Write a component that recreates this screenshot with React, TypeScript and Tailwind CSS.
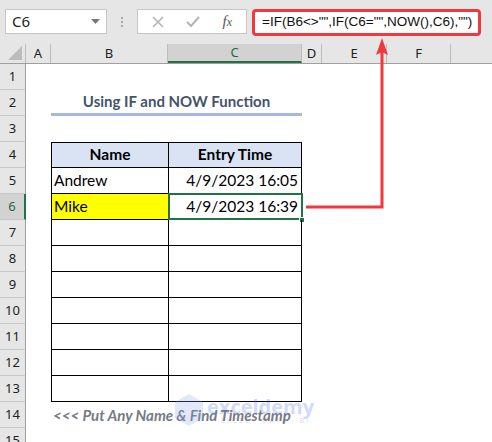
import React from "react";

const cellFont = { fontFamily: "Lato, 'Open Sans', sans-serif" };

const cols = [
  { key: "A", w: "w-[25px]" },
  { key: "B", w: "w-[117px]" },
  { key: "C", w: "w-[134px]" },
  { key: "D", w: "w-[20px]" },
  { key: "E", w: "w-[65px]" },
  { key: "F", w: "w-[64px]" },
];

function RowHeader({ n, selected }: { n: number; selected?: boolean }) {
  return (
    <div
      className={
        "w-[26px] shrink-0 h-full flex items-center justify-center text-[13px] border-b border-[#c8c8c8] " +
        (selected
          ? "bg-[#d2d2d2] text-[#1e6b3e] border-r-2 border-r-[#217346]"
          : "bg-[#e6e6e6] text-[#222] border-r border-r-[#a0a0a0]")
      }
      style={{ fontFamily: "'Noto Sans', sans-serif" }}
    >
      {n}
    </div>
  );
}

function TableRow({
  n,
  name,
  time,
  header,
  yellow,
  selected,
  first,
}: {
  n: number;
  name?: string;
  time?: string;
  header?: boolean;
  yellow?: boolean;
  selected?: boolean;
  first?: boolean;
}) {
  return (
    <div className="flex h-[26px]">
      <RowHeader n={n} selected={selected} />
      <div className="w-[25px] shrink-0" />
      <div
        className={
          "w-[117px] shrink-0 border-l border-b border-black flex items-center text-[15.5px] text-black " +
          (first ? "border-t " : "") +
          (header ? "bg-[#dae3f3] justify-center font-bold " : "pl-[2px] ") +
          (yellow ? "bg-[#ffff00] " : "")
        }
        style={cellFont}
      >
        {name}
      </div>
      <div
        className={
          "relative w-[134px] shrink-0 border-l border-r border-b border-black flex items-center text-[15.5px] text-black " +
          (first ? "border-t " : "") +
          (header ? "bg-[#dae3f3] justify-center font-bold" : "justify-end pr-[3px]")
        }
        style={cellFont}
      >
        {time}
        {selected && (
          <>
            <div className="absolute left-[-1px] right-[-2px] top-[-1px] bottom-[-1px] border-2 border-[#217346]" />
            <div className="absolute right-[-4px] bottom-[-4px] w-[6px] h-[6px] bg-[#217346] border border-white" />
          </>
        )}
      </div>
    </div>
  );
}

function PlainRow({ n, children }: { n: number; children?: React.ReactNode }) {
  return (
    <div className="flex h-[26px]">
      <RowHeader n={n} />
      <div className="flex-1 relative">{children}</div>
    </div>
  );
}

export default function App() {
  return (
    <div className="relative w-[492px] h-[442px] overflow-hidden bg-white select-none">
      {/* top bar */}
      <div className="h-[44px] bg-[#e6e6e6] flex items-start pt-[9px]">
        <div className="ml-[5px] w-[102px] h-[25px] bg-white border border-[#c6c6c6] flex items-center justify-between pl-[6px] pr-[6px]">
          <span className="text-[15px] text-[#222]" style={{ fontFamily: "'Noto Sans', sans-serif" }}>
            C6
          </span>
          <svg width="9" height="5" viewBox="0 0 9 5">
            <path d="M0 0 L9 0 L4.5 5 Z" fill="#777" />
          </svg>
        </div>
        <div className="w-[30px] h-[25px] flex flex-col items-center justify-center gap-[2px]">
          <div className="w-[2px] h-[2px] bg-[#a8a8a8]" />
          <div className="w-[2px] h-[2px] bg-[#a8a8a8]" />
          <div className="w-[2px] h-[2px] bg-[#a8a8a8]" />
        </div>
        <div className="w-[110px] h-[25px] bg-white border border-[#c6c6c6] flex items-center">
          <div className="w-[40px] flex justify-center">
            <svg width="12" height="12" viewBox="0 0 12 12">
              <path d="M1 1 L11 11 M11 1 L1 11" stroke="#b4b4b4" strokeWidth="1.6" />
            </svg>
          </div>
          <div className="w-[32px] flex justify-center">
            <svg width="14" height="12" viewBox="0 0 14 12">
              <path d="M1 6 L5 10 L13 1" stroke="#b4b4b4" strokeWidth="2" fill="none" />
            </svg>
          </div>
          <div
            className="w-[38px] flex justify-center text-[15px] italic text-[#555]"
            style={{ fontFamily: "'Liberation Serif', serif" }}
          >
            <span>
              f<span className="text-[12px]">x</span>
            </span>
          </div>
        </div>
        <div className="ml-[5px] w-[229px] h-[27px] bg-white border-[3px] border-[#f0393d] rounded-[4px] flex items-center pl-[7px]">
          <span className="text-[13.5px] text-[#111] whitespace-nowrap" style={{ fontFamily: "'Liberation Sans', sans-serif" }}>
            =IF(B6&lt;&gt;"",IF(C6="",NOW(),C6),"")
          </span>
        </div>
      </div>

      {/* column headers */}
      <div className="flex h-[20px] bg-[#e6e6e6] border-b border-[#a0a0a0]" style={{ fontFamily: "'Noto Sans', sans-serif" }}>
        <div className="w-[26px] shrink-0 relative border-r border-[#bdbdbd]">
          <svg className="absolute right-[3px] bottom-[3px]" width="14" height="14" viewBox="0 0 14 14">
            <path d="M14 0 L14 14 L0 14 Z" fill="#bcbcbc" />
          </svg>
        </div>
        {cols.map((c) => (
          <div
            key={c.key}
            className={
              c.w +
              " shrink-0 flex items-center justify-center text-[13px] " +
              (c.key === "C"
                ? "bg-[#d2d2d2] text-[#1e6b3e] border-b-2 border-b-[#217346] border-r border-r-[#bdbdbd]"
                : "text-[#222] border-r border-[#bdbdbd]")
            }
          >
            {c.key}
          </div>
        ))}
        <div className="flex-1" />
      </div>

      {/* rows */}
      <PlainRow n={1} />
      <div className="flex h-[26px]">
        <RowHeader n={2} />
        <div className="w-[25px] shrink-0" />
        <div className="w-[251px] shrink-0 flex flex-col">
          <div
            className="flex-1 flex items-center justify-center text-[15px] font-bold text-[#44546a]"
            style={cellFont}
          >
            Using IF and NOW Function
          </div>
          <div className="h-[3px] bg-[#a5b8de]" />
        </div>
      </div>
      <PlainRow n={3} />
      <TableRow n={4} name="Name" time="Entry Time" header first />
      <TableRow n={5} name="Andrew" time="4/9/2023 16:05" />
      <TableRow n={6} name="Mike" time="4/9/2023 16:39" yellow selected />
      <TableRow n={7} />
      <TableRow n={8} />
      <TableRow n={9} />
      <TableRow n={10} />
      <TableRow n={11} />
      <TableRow n={12} />
      <TableRow n={13} />
      <div className="flex h-[26px]">
        <RowHeader n={14} />
        <div className="w-[27px] shrink-0" />
        <div className="flex items-center text-[15px] font-bold italic text-[#767a86]" style={cellFont}>
          &lt;&lt;&lt; Put Any Name &amp; Find Timestamp
        </div>
      </div>
      <PlainRow n={15} />

      {/* watermark */}
      <div className="absolute left-[175px] top-[394px] flex items-center gap-[4px] opacity-25 pointer-events-none">
        <svg width="28" height="32" viewBox="0 0 28 32">
          <path d="M14 0 L28 8 L28 24 L14 32 L0 24 L0 8 Z" fill="#8fa8e8" />
        </svg>
        <div className="flex flex-col leading-none">
          <span className="text-[20px] font-bold text-[#4a6ee0]" style={{ fontFamily: "'Open Sans', sans-serif" }}>
            exceldemy
          </span>
          <span className="text-[7px] tracking-[2px] text-[#666] ml-[14px]" style={{ fontFamily: "'Open Sans', sans-serif" }}>
            EXCEL · DATA · BI
          </span>
        </div>
      </div>

      {/* red arrow overlay */}
      <svg className="absolute left-0 top-0 pointer-events-none" width="492" height="442" viewBox="0 0 492 442">
        <path d="M306 207 L382 207 L382 52" stroke="#f0393d" strokeWidth="3" fill="none" />
        <path d="M376 55 L382 38 L388 55 L382 52 Z" fill="#f0393d" />
      </svg>
    </div>
  );
}
